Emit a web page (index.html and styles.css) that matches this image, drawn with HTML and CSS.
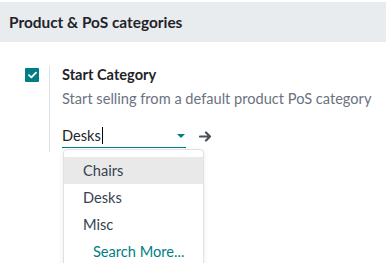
FILE: index.html
```html
<!DOCTYPE html>
<html lang="en">
<head>
    <meta charset="UTF-8">
    <title>Product &amp; PoS categories</title>
    <link rel="stylesheet" href="styles.css">
</head>
<body>
    <div class="settings-block">
        <h2 class="block-title">Product &amp; PoS categories</h2>

        <div class="setting-box">
            <div class="setting-left">
                <span class="check-box">
                    <svg width="9" height="8" viewBox="0 0 9 8"><path d="M1 4.2 L3.4 6.4 L8 1.6" fill="none" stroke="#fff" stroke-width="1.8" stroke-linecap="round" stroke-linejoin="round"/></svg>
                </span>
            </div>
            <div class="setting-right">
                <div class="setting-label">Start Category</div>
                <div class="setting-help">Start selling from a default product PoS category</div>

                <div class="field-row">
                    <div class="many2one">
                        <span class="m2o-value">Desks<span class="caret-cursor"></span></span>
                        <span class="m2o-toggle"></span>
                    </div>
                    <svg class="internal-link" width="13" height="11" viewBox="0 0 13 11"><path d="M1 5.5 H11 M7 1.5 L11 5.5 L7 9.5" fill="none" stroke="#4a5058" stroke-width="2.2" stroke-linecap="round" stroke-linejoin="round"/></svg>
                </div>

                <ul class="autocomplete">
                    <li class="active">Chairs</li>
                    <li>Desks</li>
                    <li>Misc</li>
                    <li class="search-more">Search More...</li>
                </ul>
            </div>
        </div>
    </div>
</body>
</html>
```

FILE: styles.css
```css
* {
    margin: 0;
    padding: 0;
    box-sizing: border-box;
}

body {
    font-family: 'Lato', 'Noto Sans', sans-serif;
    background: #fff;
    color: #212529;
    font-size: 14.6px;
    height: 263px;
}

.settings-block {
    padding-top: 2px;
}

.block-title {
    background: #e9ecef;
    height: 40px;
    padding-left: 9px;
    display: flex;
    align-items: center;
    font-size: 15.4px;
    font-weight: 700;
    color: #1f2329;
}

.setting-box {
    display: flex;
    margin-top: 24px;
}

.setting-left {
    width: 49px;
    padding-left: 25px;
    padding-top: 2px;
}

.check-box {
    width: 14px;
    height: 14px;
    border-radius: 1px;
    background: #017e84;
    display: flex;
    align-items: center;
    justify-content: center;
}

.setting-right {
    border-left: 1px solid #dee2e6;
    padding-left: 12px;
    height: 86px;
    position: relative;
}

.setting-label {
    font-weight: 700;
    line-height: 18px;
    color: #1f2329;
}

.setting-help {
    color: #6b7280;
    line-height: 18px;
    margin-top: 6px;
}

.field-row {
    display: flex;
    align-items: center;
    gap: 13px;
    margin-top: 16px;
}

.many2one {
    width: 124px;
    height: 24px;
    border-bottom: 1px solid #017e84;
    display: flex;
    align-items: center;
    justify-content: space-between;
    padding-right: 1px;
}

.m2o-value {
    display: flex;
    align-items: center;
    color: #212529;
}

.caret-cursor {
    width: 1px;
    height: 17px;
    background: #000;
    margin-left: 1px;
}

.m2o-toggle {
    width: 0;
    height: 0;
    border-left: 4px solid transparent;
    border-right: 4px solid transparent;
    border-top: 4px solid #017e84;
}

.autocomplete {
    position: absolute;
    top: 83px;
    left: 13px;
    width: 141px;
    list-style: none;
    background: #fff;
    border: 1px solid #dee2e6;
    border-radius: 4px;
    box-shadow: 0 2px 6px rgba(0, 0, 0, 0.08);
    padding: 7px 0 20px;
}

.autocomplete li {
    height: 27px;
    line-height: 27px;
    padding-left: 19px;
    color: #374151;
}

.autocomplete li.active {
    background: #e9e9e9;
}

.autocomplete li.search-more {
    padding-left: 29px;
    color: #017e84;
}
```
